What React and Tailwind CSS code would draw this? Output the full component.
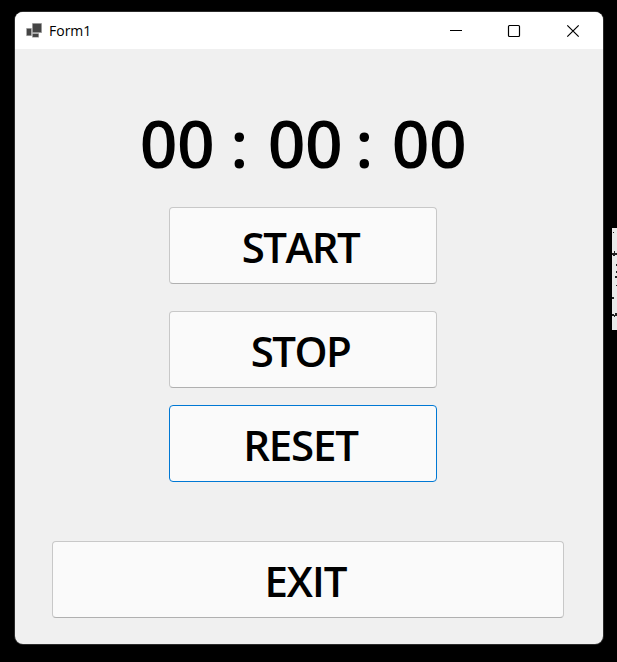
function Glyph({ className, children }) {
  return <span className={`block text-center ${className}`}>{children}</span>;
}

function FormButton({ className, labelClass, children }) {
  return (
    <button
      type="button"
      className={`flex h-[77px] items-center justify-center rounded-[4px] border bg-[#fafafa] text-[42px] leading-none font-semibold text-black ${className}`}
    >
      <span className={`mt-[2px] mr-[5px] ${labelClass}`}>{children}</span>
    </button>
  );
}

function TitleBar() {
  return (
    <header className="flex h-[37px] items-center bg-white">
      <svg className="ml-[11px] h-4 w-4" viewBox="0 0 16 16">
        <g fill="#444" stroke="#b5b5b5" strokeWidth="0.5">
          <rect x="0.5" y="5.3" width="5" height="7.5" />
          <rect x="6.3" y="0.3" width="9.4" height="9.4" />
          <rect x="6.3" y="10.5" width="6.5" height="3.7" />
        </g>
      </svg>
      <span className="ml-[7px] text-[14px] leading-none text-black">Form1</span>
      <div className="ml-auto flex items-center">
        <svg className="h-9 w-[58px]" viewBox="0 0 58 36" fill="none" stroke="#000">
          <path d="M23 17.5h12" />
        </svg>
        <svg className="h-9 w-[58px]" viewBox="0 0 58 36" fill="none" stroke="#000">
          <rect x="23.5" y="12.5" width="11" height="11" rx="1" strokeWidth="1.2" />
        </svg>
        <svg className="h-9 w-[60px]" viewBox="0 0 60 36" fill="none" stroke="#000">
          <path d="M24.3 12.3l11.4 11.4M35.7 12.3L24.3 23.7" strokeWidth="1.2" />
        </svg>
      </div>
    </header>
  );
}

export default function App() {
  return (
    <div className="flex h-[662px] w-[617px] overflow-hidden bg-black font-['Open_Sans','Liberation_Sans',sans-serif]">
      <main className="mt-3 ml-[15px] h-[632px] w-[588px] shrink-0 overflow-hidden rounded-[8px] bg-[#f0f0f0] shadow-[0_0_0_1px_#2b2b2b]">
        <TitleBar />
        <section className="flex h-[595px] flex-col">
          <div className="mt-[58px] ml-[122px] flex h-[70px] items-center text-[66px] leading-none font-semibold tracking-[-0.6px] text-black">
            <Glyph className="w-20">00</Glyph>
            <Glyph className="w-11">:</Glyph>
            <Glyph className="ml-1 w-20">00</Glyph>
            <Glyph className="-ml-[3px] w-11">:</Glyph>
            <Glyph className="ml-[3px] w-20">00</Glyph>
          </div>
          <FormButton className="mt-[30px] ml-[154px] w-[268px] border-[#c8c8c8] border-b-[#b0b0b0]" labelClass="tracking-[-1.5px]">START</FormButton>
          <FormButton className="mt-[27px] ml-[154px] w-[268px] border-[#c8c8c8] border-b-[#b0b0b0]" labelClass="tracking-[-1.6px]">STOP</FormButton>
          <FormButton className="mt-[17px] ml-[154px] w-[268px] border-[#0078d4]" labelClass="tracking-[-1.2px]">RESET</FormButton>
          <FormButton className="mt-[59px] ml-[37px] w-[512px] border-[#c8c8c8] border-b-[#b0b0b0]" labelClass="tracking-[-1px]">EXIT</FormButton>
        </section>
      </main>
      <svg className="mt-[228px] ml-[9px] h-[102px] w-[5px] shrink-0" viewBox="0 0 5 102">
        <path fill="#e9e9e9" d="M0 0h5v102H0z" />
        <g fill="#222">
          <path d="M0 25h2v-2h1v2h2v2H3v1H1v-1H0zM0 86h2v1h1v-2h2v3H3v1H2v-1H0zM0 69h2v2H0z" />
          <path d="M4 36h1v2H4zM4 43h1v2H4zM3 48h2v2H3zM1 4h1v1H1zM4 57h1v1H4z" />
        </g>
      </svg>
    </div>
  );
}
